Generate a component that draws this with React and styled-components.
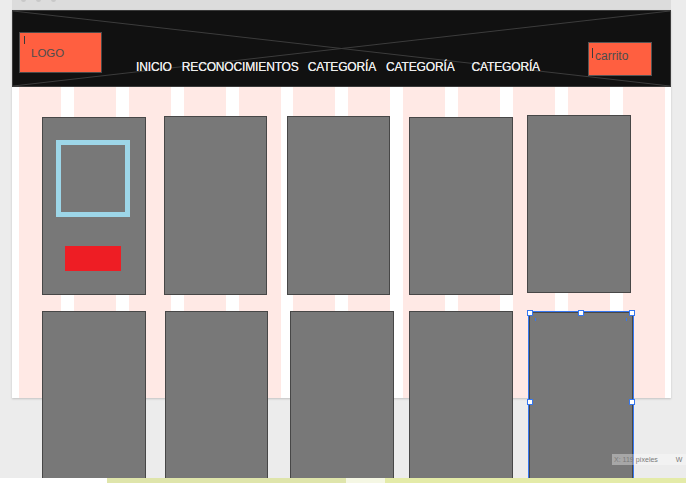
import React from "react";
import styled, { createGlobalStyle } from "styled-components";

const GlobalStyle = createGlobalStyle`
  html, body {
    margin: 0;
    padding: 0;
    background: #ececec;
    font-family: "Liberation Sans", Arial, sans-serif;
  }
  * { box-sizing: border-box; }
`;

const Page = styled.div`
  width: 686px;
  height: 483px;
  display: flex;
  flex-direction: column;
  overflow: hidden;
`;

const Stage = styled.div`
  position: relative;
  height: 478px;
  overflow: hidden;
  background: #ececec;
  padding-left: 12px;
`;

const TopStrip = styled.div`
  width: 659px;
  height: 10px;
  background: #dcdcdc;
  display: flex;
  gap: 10px;
  padding-left: 9px;
`;

const Dot = styled.span`
  width: 5px;
  height: 5px;
  margin-top: -3px;
  border-radius: 50%;
  background: #c8c8c8;
`;

const Artboard = styled.div`
  width: 659px;
  height: 388px;
  background: #fff;
  box-shadow: 0 1px 2px rgba(0, 0, 0, 0.18);
`;

const Header = styled.header`
  position: relative;
  height: 77px;
  background: #111;
  border: 1px solid #3a3a3a;
  display: flex;
  align-items: flex-start;
  padding-left: 6px;
`;

const Cross = styled.svg`
  position: absolute;
  inset: 0;
  width: 100%;
  height: 100%;
`;

const LogoBox = styled.div`
  position: relative;
  width: 83px;
  height: 41px;
  margin-top: 21px;
  background: #ff5f40;
  border: 1px solid #4a4a4a;
  display: flex;
  align-items: flex-start;
  padding: 3px 0 0 4px;
`;

const CartBox = styled(LogoBox)`
  width: 64px;
  height: 34px;
  margin-top: 31px;
  margin-left: 48px;
  padding: 5px 0 0 3px;
  border-color: #555;
`;

const Caret = styled.span`
  width: 1px;
  height: ${(p) => p.$h}px;
  background: #3a3a3a;
`;

const BoxText = styled.span`
  margin-top: ${(p) => p.$top}px;
  margin-left: ${(p) => p.$left}px;
  font-size: ${(p) => p.$size}px;
  line-height: 1;
  color: #4d4d4d;
`;

const Nav = styled.nav`
  position: relative;
  display: flex;
  margin-top: 50px;
  margin-left: 34px;
`;

const NavItem = styled.span`
  margin-left: ${(p) => p.$gap}px;
  font-size: 12px;
  line-height: 12px;
  font-weight: 400;
  color: #ececec;
  white-space: nowrap;
  letter-spacing: -0.15px;
  text-shadow: 0 0 0.4px #ececec;
`;

const Body = styled.section`
  height: 311px;
  background-color: #fff;
  background-image: repeating-linear-gradient(
    to right,
    #ffe9e5 0 42px,
    #fff 42px 54.9px
  );
  background-position: 7px 0;
  padding-top: 28px;
`;

const Row = styled.div`
  display: flex;
  align-items: flex-start;
  height: ${(p) => p.$h}px;
  margin-top: ${(p) => p.$top}px;
`;

const Card = styled.div`
  position: relative;
  flex: none;
  width: ${(p) => p.$w}px;
  height: ${(p) => p.$h}px;
  margin-left: ${(p) => p.$dx}px;
  margin-top: ${(p) => p.$dy}px;
  background: #787878;
  border: 1px solid #474747;
  box-shadow: ${(p) => (p.$selected ? "0 0 0 1px #3677f0" : "none")};
`;

const Frame = styled.div`
  width: 74px;
  height: 77px;
  margin: 22px 0 0 13px;
  border: 5px solid #9dd6e8;
`;

const RedBar = styled.div`
  width: 56px;
  height: 25px;
  margin: 29px 0 0 22px;
  background: #ee1d24;
`;

const Handle = styled.span`
  position: absolute;
  width: 6px;
  height: 6px;
  background: #fff;
  border: 1px solid #3677f0;
  left: ${(p) => p.$x};
  top: ${(p) => p.$y};
  transform: translate(-50%, -50%);
`;

const Tick = styled.span`
  position: absolute;
  width: 1px;
  height: 3px;
  background: #3677f0;
  left: ${(p) => p.$x}px;
  top: 5px;
`;

const Tooltip = styled.div`
  position: absolute;
  left: 612px;
  top: 454px;
  width: 74px;
  height: 11px;
  background: rgba(255, 255, 255, 0.35);
  display: flex;
  align-items: center;
  padding-left: 2px;
  font-size: 7px;
  line-height: 1;
  color: #7a7a7a;
  white-space: nowrap;
`;

const W = styled.span`
  margin-left: 18px;
`;

const BottomBar = styled.div`
  display: flex;
  height: 5px;
`;

const BarPart = styled.span`
  width: ${(p) => p.$w}px;
  background: ${(p) => p.$c};
`;

const row1 = [
  { dx: 30, w: 104, dy: 2, h: 178, hero: true },
  { dx: 18, w: 103, dy: 1, h: 179 },
  { dx: 20, w: 103, dy: 1, h: 179 },
  { dx: 19, w: 104, dy: 2, h: 178 },
  { dx: 14, w: 104, dy: 0, h: 178 },
];

const row2 = [
  { dx: 30, w: 104, dy: 0, h: 180 },
  { dx: 19, w: 103, dy: 0, h: 180 },
  { dx: 22, w: 104, dy: 0, h: 180 },
  { dx: 15, w: 104, dy: 0, h: 180 },
  { dx: 16, w: 104, dy: 1, h: 180, selected: true },
];

const nav = [
  { label: "INICIO", gap: 0 },
  { label: "RECONOCIMIENTOS", gap: 10 },
  { label: "CATEGORÍA", gap: 9 },
  { label: "CATEGORÍA", gap: 10 },
  { label: "CATEGORÍA", gap: 17 },
];

function Handles() {
  const spots = [
    ["0%", "0%"],
    ["50%", "0%"],
    ["100%", "0%"],
    ["0%", "50%"],
    ["100%", "50%"],
    ["0%", "100%"],
    ["50%", "100%"],
    ["100%", "100%"],
  ];
  return (
    <>
      {spots.map(([x, y], i) => (
        <Handle key={i} $x={x} $y={y} />
      ))}
      <Tick $x={5} />
      <Tick $x={96} />
    </>
  );
}

export default function App() {
  return (
    <Page>
      <GlobalStyle />
      <Stage>
        <TopStrip>
          <Dot />
          <Dot />
          <Dot />
        </TopStrip>
        <Artboard>
          <Header>
            <Cross viewBox="0 0 100 100" preserveAspectRatio="none">
              <line x1="0" y1="0" x2="100" y2="100" stroke="#3c3c3c" strokeWidth="1" vectorEffect="non-scaling-stroke" />
              <line x1="0" y1="100" x2="100" y2="0" stroke="#3c3c3c" strokeWidth="1" vectorEffect="non-scaling-stroke" />
            </Cross>
            <LogoBox>
              <Caret $h={8} />
              <BoxText $top={12} $left={6} $size={11.5}>LOGO</BoxText>
            </LogoBox>
            <Nav>
              {nav.map((n, i) => (
                <NavItem key={i} $gap={n.gap}>{n.label}</NavItem>
              ))}
            </Nav>
            <CartBox>
              <Caret $h={10} />
              <BoxText $top={2} $left={2} $size={12}>carrito</BoxText>
            </CartBox>
          </Header>
          <Body>
            <Row $h={181} $top={0}>
              {row1.map((c, i) => (
                <Card key={i} $dx={c.dx} $w={c.w} $dy={c.dy} $h={c.h}>
                  {c.hero && (
                    <>
                      <Frame />
                      <RedBar />
                    </>
                  )}
                </Card>
              ))}
            </Row>
            <Row $h={180} $top={15}>
              {row2.map((c, i) => (
                <Card key={i} $dx={c.dx} $w={c.w} $dy={c.dy} $h={c.h} $selected={c.selected}>
                  {c.selected && <Handles />}
                </Card>
              ))}
            </Row>
          </Body>
        </Artboard>
        <Tooltip>
          X: 119 píxeles<W>W</W>
        </Tooltip>
      </Stage>
      <BottomBar>
        <BarPart $w={107} $c="#ffffff" />
        <BarPart $w={239} $c="#dfe5ab" />
        <BarPart $w={39} $c="#f5f7e4" />
        <BarPart $w={301} $c="#e4eba8" />
      </BottomBar>
    </Page>
  );
}
